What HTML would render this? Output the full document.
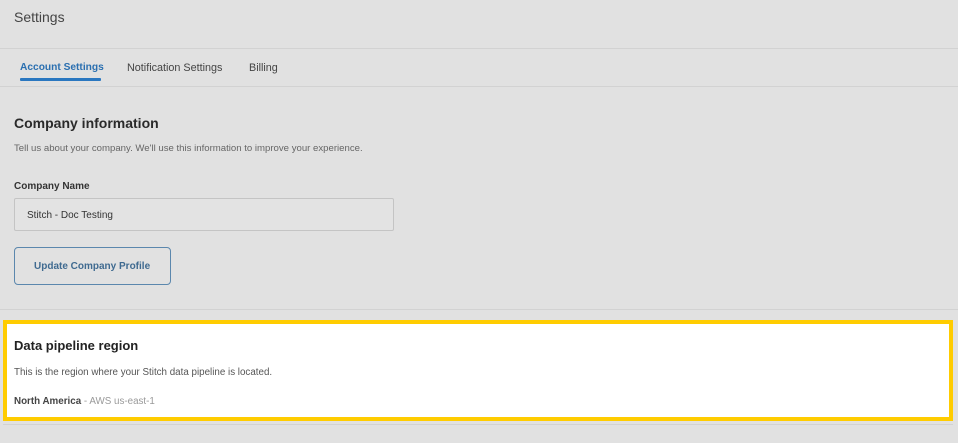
<!DOCTYPE html>
<html><head><style>
*{margin:0;padding:0;box-sizing:border-box}
body{width:958px;height:443px;background:#e1e1e1;font-family:"Liberation Sans",sans-serif;position:relative;overflow:hidden;color:#222}
.a{position:absolute;white-space:nowrap}
.line{position:absolute;left:0;width:958px;height:1px;background:#d2d2d2}
</style></head><body>
<div class="a" style="left:14px;top:9px;font-size:14px;color:#444">Settings</div>
<div class="line" style="top:48px"></div>
<div class="a" style="left:20px;top:62px;font-size:10.2px;color:#2a6fb0;font-weight:bold">Account Settings</div>
<div class="a" style="left:20px;top:78px;width:81px;height:3px;background:#2a77c0;border-radius:1px"></div>
<div class="a" style="left:127px;top:62px;font-size:10.8px;color:#444">Notification Settings</div>
<div class="a" style="left:249px;top:62px;font-size:10.8px;color:#444">Billing</div>
<div class="line" style="top:86px"></div>
<div class="a" style="left:14px;top:115px;font-size:14px;font-weight:bold;color:#2a2a2a">Company information</div>
<div class="a" style="left:14px;top:143px;font-size:9.6px;color:#666">Tell us about your company. We'll use this information to improve your experience.</div>
<div class="a" style="left:14px;top:181px;font-size:10px;font-weight:bold;color:#333">Company Name</div>
<div class="a" style="left:14px;top:198px;width:380px;height:33px;border:1px solid #c4c4c4;border-radius:2px;background:#e3e3e3"></div>
<div class="a" style="left:27px;top:210px;font-size:10px;color:#333">Stitch - Doc Testing</div>
<div class="a" style="left:14px;top:247px;width:157px;height:38px;border:1.5px solid #5b87ad;border-radius:4px"></div>
<div class="a" style="left:34px;top:261px;font-size:10px;font-weight:bold;color:#3f6a90">Update Company Profile</div>
<div class="line" style="top:309px"></div>
<div class="a" style="left:3px;top:320px;width:950px;height:101px;border:4px solid #ffcc00;background:#fff"></div>
<div class="a" style="left:14px;top:338px;font-size:13px;font-weight:bold;color:#222">Data pipeline region</div>
<div class="a" style="left:14px;top:367px;font-size:9.8px;color:#555">This is the region where your Stitch data pipeline is located.</div>
<div class="a" style="left:14px;top:396px;font-size:9.8px;color:#444"><b>North America</b> <span style="color:#999">- AWS us-east-1</span></div>
<div class="line" style="top:424px;left:3px;width:950px"></div>
</body></html>
